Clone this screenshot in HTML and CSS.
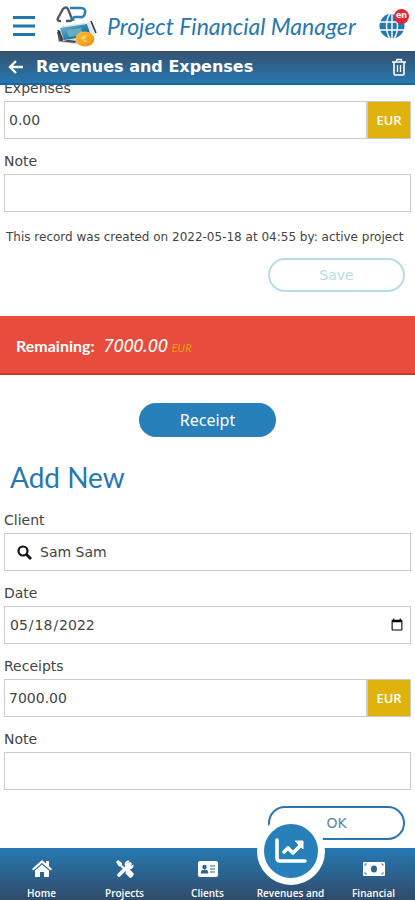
FILE: index.html
```html
<!DOCTYPE html>
<html lang="en">
<head>
<meta charset="utf-8">
<meta name="viewport" content="width=device-width, initial-scale=1">
<title>Project Financial Manager</title>
<link rel="stylesheet" href="styles.css">
</head>
<body>
<header class="brand">
  <button class="icon-btn" type="button" aria-label="Menu">
    <svg width="24" height="22" viewBox="0 0 24 22"><path d="M1 2.500h22M1 11h22M1 19.500h22" stroke="#2474ae" stroke-width="2.800"/></svg>
  </button>
  <svg class="logo" width="44" height="44" viewBox="0 0 44 44" aria-hidden="true">
    <defs>
      <linearGradient id="note" x1="0" y1="0" x2="1" y2="1"><stop offset="0" stop-color="#78bdce"/><stop offset=".5" stop-color="#2e88b2"/><stop offset="1" stop-color="#153b70"/></linearGradient>
      <linearGradient id="coin" x1="0" y1="0" x2="1" y2="1"><stop offset="0" stop-color="#ffc83d"/><stop offset="1" stop-color="#ee8710"/></linearGradient>
    </defs>
    <path d="M3 26l5-1 2 9 14 2-1 4-20-2z" fill="#c9cbc9"/>
    <path d="M2 28l3-1 2 8 14 2-1 2-16-2z" fill="#4a4e52"/>
    <path d="M7 22l30-4 3 12-32 7z" fill="#dce7e8"/>
    <path d="M5 24l27-4 4 12-27 4z" fill="url(#note)"/>
    <path d="M11 26l15-2 2 7-14 2z" fill="#65acbd"/>
    <path d="M32 19l5-2 3 10-4 3z" fill="#e3e7e9"/>
    <path d="M3 26l5 10M36 17l5 12" fill="none" stroke="#2c3b52" stroke-width="1.600"/>
    <path d="M6 17H4q-2-1-1-3L8 5q3-3 5 0l4 10q0 2-3 2h-3" fill="none" stroke="#555b60" stroke-width="2.400"/>
    <path d="M15 4h11q5 0 4 5t-5 4h-5q-2 0-2 4" fill="none" stroke="#2d80b5" stroke-width="2.600"/>
    <ellipse cx="30" cy="35" rx="9.500" ry="7.500" fill="url(#coin)"/>
    <ellipse cx="29.500" cy="34.500" rx="6.500" ry="5" fill="none" stroke="#f9a928"/>
    <path d="M32 32q-4-1-4 2.500t4 2.500m-6-3h5" fill="none" stroke="#ffe183"/>
  </svg>
  <h1 class="brand-name">Project Financial Manager</h1>
  <button class="icon-btn language" type="button" aria-label="Language, English">
    <svg width="26" height="26" viewBox="0 0 26 26"><circle cx="13" cy="13" r="12.500" fill="#2777b0"/><g fill="none" stroke="#fff" stroke-width="1.400"><ellipse cx="13" cy="13" rx="5.500" ry="13"/><path d="M0 9h26M0 17h26M13 0v26"/></g></svg>
    <span class="badge">en</span>
  </button>
</header>

<div class="titlebar">
  <button class="icon-btn" type="button" aria-label="Back">
    <svg width="16" height="16" viewBox="0 0 16 16"><path d="M8 2L2 8l6 6M2 8h13" fill="none" stroke="#fff" stroke-width="2.400"/></svg>
  </button>
  <h2 class="title">Revenues and Expenses</h2>
  <button class="icon-btn" type="button" aria-label="Delete">
    <svg width="16" height="18" viewBox="0 0 16 18"><path d="M1 4h14M3 4v12q0 1 1 1h8q1 0 1-1V4M5 4l1-2.500h4L11 4" fill="none" stroke="#fff" stroke-width="1.600"/><path d="M6.500 7v7M9.500 7v7" stroke="#fff" stroke-width="1.300"/></svg>
  </button>
</div>

<main class="content">
  <form class="form record">
    <div class="field">
      <label for="expenses">Expenses</label>
      <div class="group"><input class="control" id="expenses" type="text" value="0.00"><span class="unit">EUR</span></div>
    </div>
    <div class="field">
      <label for="note">Note</label>
      <input class="control" id="note" type="text">
    </div>
    <p class="stamp">This record was created on 2022-05-18 at 04:55 by: active project</p>
    <button class="pill outline faded" type="button">Save</button>
  </form>

  <section class="remaining">
    <strong>Remaining:</strong>
    <em class="amount">7000.00</em>
    <em class="currency">EUR</em>
  </section>

  <button class="pill solid" type="button">Receipt</button>

  <h2 class="section-title">Add New</h2>

  <form class="form">
    <div class="field">
      <label for="client">Client</label>
      <div class="group search">
        <svg width="15" height="15" viewBox="0 0 15 15" aria-hidden="true"><circle cx="6" cy="6" r="4.500" fill="none" stroke="#111" stroke-width="2.200"/><path d="M9.500 9.500L14 14" stroke="#111" stroke-width="2.800"/></svg>
        <input class="control" id="client" type="text" value="Sam Sam">
      </div>
    </div>
    <div class="field">
      <label for="date">Date</label>
      <input class="control" id="date" type="date" value="2022-05-18">
    </div>
    <div class="field">
      <label for="receipts">Receipts</label>
      <div class="group"><input class="control" id="receipts" type="text" value="7000.00"><span class="unit">EUR</span></div>
    </div>
    <div class="field">
      <label for="note-new">Note</label>
      <input class="control" id="note-new" type="text">
    </div>
    <button class="pill outline" type="button">OK</button>
  </form>
</main>

<nav class="tabs">
  <a class="tab" href="#home">
    <svg width="20" height="18" viewBox="0 0 20 18"><path d="M0 9L10 0l4 3.500V1h3v5.300L20 9l-1.300 1.500L10 3 1.300 10.500z" fill="#fff"/><path d="M3 10.500l7-6 7 6V17h-5v-5H8v5H3z" fill="#fff"/></svg>
    <span>Home</span>
  </a>
  <a class="tab" href="#projects">
    <svg width="18" height="18" viewBox="0 0 18 18"><path d="M3 15L14 4" stroke="#fff" stroke-width="3.600" stroke-linecap="round"/><path d="M17.500 4.500L14.500 6 12 3.500 13.500.500C10 0 8 3 9 6l3 3c3 1 6-1 5.500-4.500z" fill="#fff"/><path d="M0 2l2-2 4 3v2l3 3-1.500 1.500-3-3H3z" fill="#fff"/><path d="M10 10l1.500-1.500 2 .500L18 14q-1 3-4 4l-4.500-4.500z" fill="#fff"/></svg>
    <span>Projects</span>
  </a>
  <a class="tab" href="#clients">
    <svg width="22" height="18" viewBox="0 0 22 18"><rect x="1" y="1" width="20" height="16" rx="2" fill="#fff"/><path d="M4 13q0-3 3.500-3t3.500 3zM13 6h5M13 9h5M13 12h5" fill="#2a6492" stroke="#2a6492" stroke-width="1"/><circle cx="7.500" cy="7" r="2.200" fill="#2a6492"/></svg>
    <span>Clients</span>
  </a>
  <a class="tab active" href="#revenues" aria-current="page">
    <span class="bubble"><svg width="32" height="26" viewBox="0 0 32 26"><g fill="none" stroke="#fff" stroke-width="3.600" stroke-linecap="round" stroke-linejoin="round"><path d="M2 2v18q0 3 3 3h25"/><path d="M9 14l4-4 5 5 7-7"/></g><path d="M20 3h8v8z" fill="#fff" stroke="#fff" stroke-linejoin="round"/></svg></span>
    <span>Revenues and</span>
  </a>
  <a class="tab" href="#financial">
    <svg width="24" height="18" viewBox="0 0 24 18"><rect x="1" y="2" width="22" height="14" rx="1" fill="#fff"/><ellipse cx="12" cy="9" rx="3" ry="3.600" fill="#2a6492"/><path d="M3 6V4h2M19 4h2v2M3 12v2h2M21 12v2h-2" fill="none" stroke="#2a6492" stroke-width=".8"/></svg>
    <span>Financial</span>
  </a>
</nav>
</body>
</html>
```
FILE: styles.css
```css
* { box-sizing: border-box; }

body {
  display: flex;
  flex-direction: column;
  height: 100vh;
  margin: 0;
  background: #fff;
  color: #444;
  font: 14px/20px "DejaVu Sans", Verdana, sans-serif;
}

h1, h2, p { margin: 0; }

button, input { font: inherit; color: inherit; }

svg { display: block; flex: none; }

.icon-btn {
  position: relative;
  padding: 0;
  border: 0;
  background: none;
}

.brand {
  display: flex;
  flex: none;
  align-items: center;
  height: 51px;
  padding: 0 10px 0 12px;
}

.logo { margin-left: 19px; }

.brand-name {
  flex: 1;
  padding-left: 8px;
  color: #2777b0;
  font: italic 400 23px/32px "Segoe Script", "Brush Script MT", Lato, cursive;
  white-space: nowrap;
}

.badge {
  position: absolute;
  top: -4px;
  right: -4px;
  width: 15px;
  height: 15px;
  border-radius: 50%;
  background: #e12636;
  color: #fff;
  font-size: 8px;
  font-weight: bold;
  line-height: 14px;
  text-align: center;
}

.titlebar {
  display: flex;
  flex: none;
  align-items: center;
  gap: 12px;
  height: 34px;
  padding: 0 8px;
  border-bottom: 2px solid #1668a2;
  background: linear-gradient(#34516e, #2777b0);
  color: #fff;
}

.title {
  flex: 1;
  font-size: 16px;
  line-height: 24px;
}

.content {
  flex: 1;
  min-height: 0;
  overflow: auto;
  scrollbar-width: none;
}

.form {
  display: flex;
  flex-direction: column;
  gap: 12px;
  padding: 0 4px;
}

.record { margin-top: -7px; }

.field {
  display: flex;
  flex-direction: column;
  gap: 3px;
}

.control {
  width: 100%;
  height: 38px;
  padding: 0 4px;
  border: 1px solid #ccc;
  border-radius: 0;
  outline: 0;
  background: #fff;
}

.group { display: flex; }

.group .control {
  flex: 1;
  min-width: 0;
}

.unit {
  width: 44px;
  border: 1px solid #ccc;
  background: #dfb20d;
  color: #fff;
  font: 600 13px/36px "Open Sans", sans-serif;
  text-align: center;
}

.search {
  align-items: center;
  padding-left: 12px;
  border: 1px solid #ccc;
}

.search .control {
  height: 36px;
  padding: 0 8px;
  border: 0;
}

.stamp {
  padding: 0 2px;
  margin-bottom: -4px;
  font-size: 12px;
  line-height: 26px;
  white-space: nowrap;
}

.pill {
  display: block;
  width: 137px;
  height: 34px;
  padding: 0;
  border: 2px solid #2777b0;
  border-radius: 17px;
}

.outline {
  align-self: flex-end;
  margin: 4px 6px 0 0;
  background: #fff;
  color: #5686b0;
}

.faded {
  margin-top: 0;
  border-color: #b9dbea;
  color: #b9dbea;
}

.solid {
  margin: 28px auto 24px;
  border-color: #2780b9;
  background: #2780b9;
  color: #fff;
  font: 16px/24px "Noto Sans", sans-serif;
}

.remaining {
  display: flex;
  align-items: baseline;
  height: 59px;
  margin-top: 24px;
  padding: 16px;
  border-bottom: 2px solid #cf341f;
  background: #e74c3c;
  color: #fff;
  font: 16px/26px Lato, sans-serif;
}

.amount {
  padding: 0 4px 0 9px;
  font-family: "Noto Sans", sans-serif;
  font-size: 18px;
}

.currency {
  color: #f39c12;
  font-size: 11px;
}

.section-title {
  margin-bottom: 17px;
  padding-left: 10px;
  color: #2777b0;
  font: 400 28px/32px "Segoe Print", "Comic Sans MS", Lato, cursive;
}

.tabs {
  display: flex;
  flex: none;
  height: 52px;
  background: linear-gradient(#2579b3, #314b69);
}

.tab {
  position: relative;
  display: flex;
  flex: 1;
  flex-direction: column;
  align-items: center;
  justify-content: space-between;
  padding-top: 12px;
  color: #fff;
  font: 600 10px/14px "Open Sans", sans-serif;
  text-decoration: none;
}

.active { justify-content: flex-end; }

.bubble {
  position: absolute;
  top: -31px;
  display: grid;
  place-items: center;
  width: 68px;
  height: 68px;
  border: 7px solid #fff;
  border-radius: 50%;
  background: #2780b9;
}
```
